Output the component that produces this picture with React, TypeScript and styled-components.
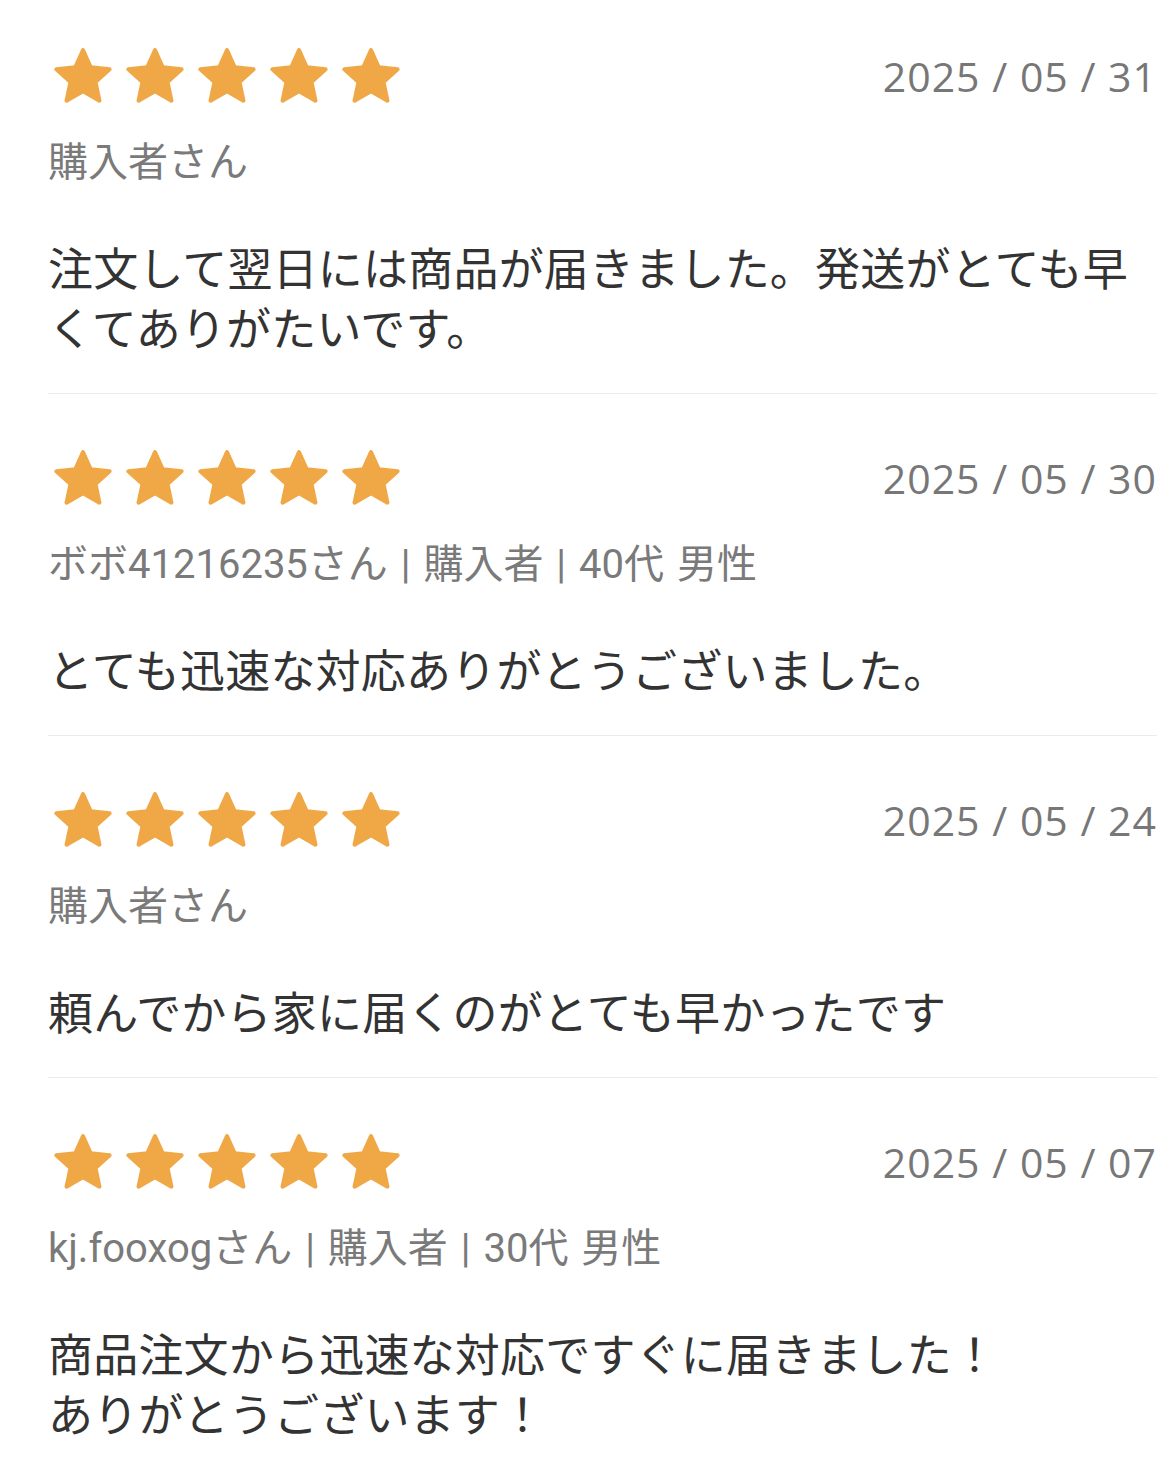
import React from "react";
import styled, { createGlobalStyle } from "styled-components";

const Global = createGlobalStyle`
  html, body { margin: 0; padding: 0; background: #fff; }
  body { font-family: "Noto Sans CJK JP", "Noto Sans", sans-serif; }
`;

const List = styled.div`
  display: flex;
  flex-direction: column;
  padding: 0 18px 0 48px;
`;

const Review = styled.section<{ $first?: boolean }>`
  display: flex;
  flex-direction: column;
  padding: ${(p) => (p.$first ? "47px" : "55px")} 0 36px;
  border-top: ${(p) => (p.$first ? "none" : "1px solid #ebebeb")};
`;

const Header = styled.div`
  display: flex;
  align-items: center;
  justify-content: space-between;
  height: 58px;
`;

const Stars = styled.div`
  display: flex;
  gap: 14px;
  padding-left: 6px;
`;

const DateText = styled.div`
  font-family: "Open Sans", "Noto Sans", sans-serif;
  font-size: 41px;
  color: #777;
  letter-spacing: 1px;
  line-height: 1;
`;

const Meta = styled.div`
  margin-top: 33px;
  font-family: Roboto, "Noto Sans CJK JP", sans-serif;
  font-size: 40px;
  line-height: 50px;
  color: #7a7a7a;
  white-space: nowrap;
  word-spacing: 3px;
`;

const Body = styled.p`
  margin: 49px 0 0;
  font-size: 45px;
  line-height: 60px;
  color: #333;
  letter-spacing: 0.2px;
`;

const Star = () => {
  const cx = 29, cy = 31, R = 28, r = 13.2;
  const pts: string[] = [];
  for (let i = 0; i < 10; i++) {
    const rad = i % 2 === 0 ? R : r;
    const a = -Math.PI / 2 + (i * Math.PI) / 5;
    pts.push(`${(cx + rad * Math.cos(a)).toFixed(2)},${(cy + rad * Math.sin(a)).toFixed(2)}`);
  }
  return (
    <svg width="58" height="58" viewBox="0 0 58 58">
      <polygon points={pts.join(" ")} fill="#F0A846" stroke="#F0A846" strokeWidth="4" strokeLinejoin="round" />
    </svg>
  );
};

const reviews = [
  { date: "2025 / 05 / 31", meta: "購入者さん", body: "注文して翌日には商品が届きました。発送がとても早くてありがたいです。" },
  { date: "2025 / 05 / 30", meta: "ボボ41216235さん | 購入者 | 40代 男性", body: "とても迅速な対応ありがとうございました。" },
  { date: "2025 / 05 / 24", meta: "購入者さん", body: "頼んでから家に届くのがとても早かったです" },
  { date: "2025 / 05 / 07", meta: "kj.fooxogさん | 購入者 | 30代 男性", body: "商品注文から迅速な対応ですぐに届きました！\nありがとうございます！" },
];

export default function App() {
  return (
    <>
      <Global />
      <List>
        {reviews.map((r, i) => (
          <Review key={i} $first={i === 0}>
            <Header>
              <Stars>
                {[0, 1, 2, 3, 4].map((s) => (
                  <Star key={s} />
                ))}
              </Stars>
              <DateText>{r.date}</DateText>
            </Header>
            <Meta>{r.meta}</Meta>
            <Body>
              {r.body.split("\n").map((line, j) => (
                <React.Fragment key={j}>
                  {j > 0 && <br />}
                  {line}
                </React.Fragment>
              ))}
            </Body>
          </Review>
        ))}
      </List>
    </>
  );
}
